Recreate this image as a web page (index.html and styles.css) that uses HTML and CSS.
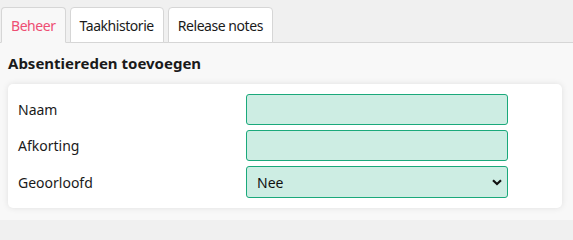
FILE: index.html
```html
<!DOCTYPE html>
<html lang="nl">
<head>
<meta charset="utf-8">
<title>Beheer</title>
<link rel="stylesheet" href="styles.css">
</head>
<body>
<nav class="tabs">
  <a class="tab active">Beheer</a>
  <a class="tab">Taakhistorie</a>
  <a class="tab">Release notes</a>
</nav>
<main class="content">
  <h2 class="title">Absentiereden toevoegen</h2>
  <form class="card">
    <label class="label" for="naam">Naam</label>
    <input class="field" id="naam" type="text">
    <label class="label" for="afk">Afkorting</label>
    <input class="field" id="afk" type="text">
    <label class="label" for="geo">Geoorloofd</label>
    <div class="select-wrap">
      <select class="field select" id="geo"><option>Nee</option><option>Ja</option></select>
      <svg class="chevron" viewBox="0 0 10 7" width="10" height="7"><path d="M1 1.2 L5 5 L9 1.2" fill="none" stroke="#111" stroke-width="2.2"/></svg>
    </div>
  </form>
</main>
</body>
</html>
```
FILE: styles.css
```css
html, body {
  margin: 0;
  padding: 0;
}
body {
  background: #f0f0f0;
  font-family: "Noto Sans", "Open Sans", sans-serif;
  color: #1a1a1a;
}
.tabs {
  display: flex;
  gap: 4px;
  padding: 7px 0 0 1px;
  border-bottom: 1px solid #d6d6d6;
  height: 35px;
  box-sizing: content-box;
}
.tab {
  display: flex;
  align-items: center;
  box-sizing: border-box;
  height: 36px;
  padding: 0 9px;
  background: #fff;
  border: 1px solid #d6d6d6;
  border-radius: 4px 4px 0 0;
  font-size: 14px;
  letter-spacing: -0.45px;
  color: #1a1a1a;
  cursor: pointer;
}
.tab.active {
  background: #f8f8f8;
  color: #ee4e73;
  border-bottom-color: #f8f8f8;
}
.content {
  background: #f8f8f8;
  padding: 10px 11px 12px 8px;
}
.title {
  margin: 0 0 11px 0;
  font-size: 15px;
  font-weight: bold;
  line-height: 20px;
  color: #1a1a1a;
}
.card {
  display: grid;
  grid-template-columns: 228px 262px;
  row-gap: 5px;
  padding: 10px;
  background: #fff;
  border-radius: 5px;
  box-shadow: 0 0 6px rgba(0,0,0,0.10);
}
.label {
  display: flex;
  align-items: center;
  font-size: 14px;
}
.field {
  box-sizing: border-box;
  height: 31px;
  width: 262px;
  margin: 0;
  background: #cdede3;
  border: 1px solid #1aa97b;
  border-radius: 3px;
  font-family: inherit;
  font-size: 14px;
  font-weight: normal;
  color: #111;
  padding: 0 10px;
}
.select-wrap {
  position: relative;
}
.select {
  appearance: none;
  -webkit-appearance: none;
  height: 32px;
}
.chevron {
  position: absolute;
  right: 6px;
  top: 13px;
  pointer-events: none;
}
```
